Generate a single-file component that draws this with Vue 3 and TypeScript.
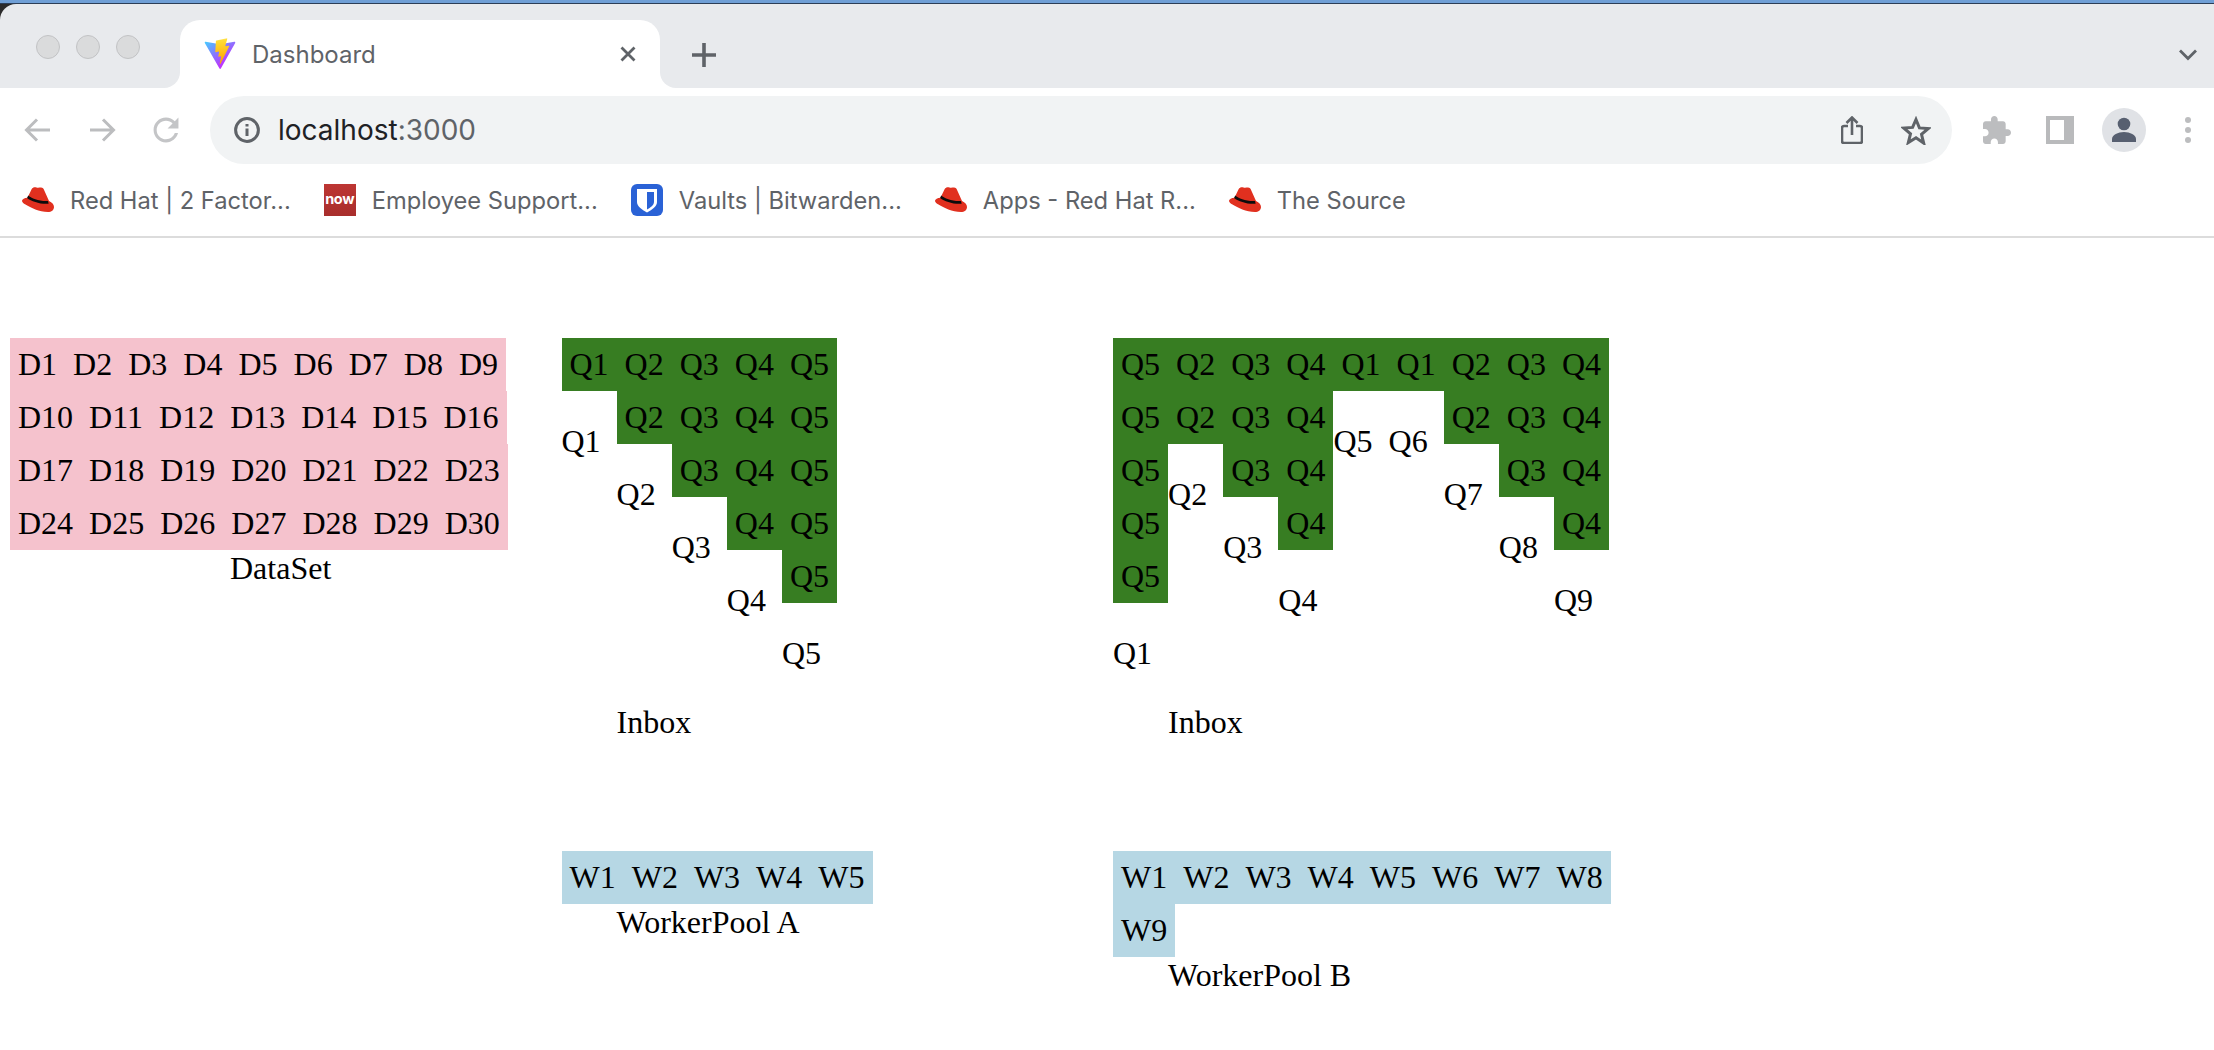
<script setup lang="ts">
interface Bookmark {
  label: string;
  icon: 'hat' | 'now' | 'vault';
}

const bookmarks: Bookmark[] = [
  { label: 'Red Hat | 2 Factor...', icon: 'hat' },
  { label: 'Employee Support...', icon: 'now' },
  { label: 'Vaults | Bitwarden...', icon: 'vault' },
  { label: 'Apps - Red Hat R...', icon: 'hat' },
  { label: 'The Source', icon: 'hat' },
];

const numbered = (prefix: string, count: number) =>
  Array.from({ length: count }, (_, i) => `${prefix}${i + 1}`);

const dataset = numbered('D', 30);

const inboxA = [
  { name: 'Q1', items: ['Q1'] },
  { name: 'Q2', items: ['Q2', 'Q2'] },
  { name: 'Q3', items: ['Q3', 'Q3', 'Q3'] },
  { name: 'Q4', items: ['Q4', 'Q4', 'Q4', 'Q4'] },
  { name: 'Q5', items: ['Q5', 'Q5', 'Q5', 'Q5', 'Q5'] },
];

const inboxB = [
  { name: 'Q1', items: ['Q5', 'Q5', 'Q5', 'Q5', 'Q5'] },
  { name: 'Q2', items: ['Q2', 'Q2'] },
  { name: 'Q3', items: ['Q3', 'Q3', 'Q3'] },
  { name: 'Q4', items: ['Q4', 'Q4', 'Q4', 'Q4'] },
  { name: 'Q5', items: ['Q1'] },
  { name: 'Q6', items: ['Q1'] },
  { name: 'Q7', items: ['Q2', 'Q2'] },
  { name: 'Q8', items: ['Q3', 'Q3', 'Q3'] },
  { name: 'Q9', items: ['Q4', 'Q4', 'Q4', 'Q4'] },
];

const poolA = numbered('W', 5);
const poolB = numbered('W', 9);
</script>

<template>
  <header class="chrome">
    <div class="top-edge"></div>
    <div class="strip">
      <div class="lights">
        <span class="light"></span>
        <span class="light"></span>
        <span class="light"></span>
      </div>
      <div class="tab">
        <svg class="favicon" viewBox="0 0 410 404">
          <defs>
            <linearGradient id="viteA" x1="6" y1="33" x2="235" y2="344" gradientUnits="userSpaceOnUse">
              <stop offset="0" stop-color="#41d1ff" />
              <stop offset="1" stop-color="#bd34fe" />
            </linearGradient>
            <linearGradient id="viteB" x1="194" y1="8" x2="236" y2="293" gradientUnits="userSpaceOnUse">
              <stop offset="0" stop-color="#ffea83" />
              <stop offset="0.08" stop-color="#ffdd35" />
              <stop offset="1" stop-color="#ffa800" />
            </linearGradient>
          </defs>
          <path fill="url(#viteA)" d="M399.641 59.5246L215.643 388.545C211.844 395.338 202.084 395.378 198.228 388.618L10.5817 59.5563C6.38087 52.1896 12.6802 43.2665 21.0281 44.7586L205.223 77.6824C206.398 77.8924 207.601 77.8904 208.776 77.6763L389.119 44.8058C397.439 43.2894 403.768 52.1434 399.641 59.5246Z" />
          <path fill="url(#viteB)" d="M292.965 1.5744L156.801 28.2552C154.563 28.6937 152.906 30.5903 152.771 32.8664L144.395 174.33C144.198 177.662 147.258 180.248 150.51 179.498L188.42 170.749C191.967 169.931 195.172 173.055 194.443 176.622L183.18 231.775C182.422 235.487 185.907 238.661 189.532 237.56L212.947 230.446C216.577 229.344 220.065 232.527 219.297 236.242L201.398 322.875C200.278 328.294 207.486 331.249 210.492 326.603L212.5 323.5L323.454 102.072C325.312 98.3645 322.108 94.137 318.036 94.9228L279.014 102.454C275.347 103.161 272.227 99.746 273.262 96.1583L298.731 7.86689C299.767 4.27314 296.636 0.855181 292.965 1.5744Z" />
        </svg>
        <span class="tab-title">Dashboard</span>
        <svg class="tab-close" viewBox="0 0 16 16">
          <path d="M1.5 1.5l13 13M14.5 1.5l-13 13" />
        </svg>
      </div>
      <div class="strip-rest">
        <svg class="new-tab" viewBox="0 0 24 24">
          <path d="M12 0v24M0 12h24" />
        </svg>
        <svg class="tab-menu" viewBox="0 0 18 12">
          <path d="M1 1.5l8 8 8-8" />
        </svg>
      </div>
    </div>

    <div class="toolbar">
      <div class="nav">
        <svg class="nav-icon" viewBox="0 0 28 28">
          <path d="M26 14H3M13 3.5L2.5 14 13 24.5" />
        </svg>
        <svg class="nav-icon" viewBox="0 0 28 28">
          <path d="M2 14h23M15 3.5L25.5 14 15 24.5" />
        </svg>
        <svg class="nav-icon reload" viewBox="3 3 18 18">
          <path d="M17.65 6.35C16.2 4.9 14.21 4 12 4c-4.42 0-7.99 3.58-7.99 8s3.57 8 7.99 8c3.73 0 6.84-2.55 7.73-6h-2.08c-.82 2.33-3.04 4-5.65 4-3.31 0-6-2.69-6-6s2.69-6 6-6c1.66 0 3.14.69 4.22 1.78L13 11h7V4l-2.35 2.35z" />
        </svg>
      </div>
      <div class="omnibox">
        <svg class="info" viewBox="0 0 26 26">
          <circle cx="13" cy="13" r="11.4" />
          <path d="M13 11.5v7.5M13 7v2.6" />
        </svg>
        <span class="url">localhost<span class="port">:3000</span></span>
        <svg class="share" viewBox="0 0 22 28">
          <path d="M7 10H3a2 2 0 0 0-2 2v13a2 2 0 0 0 2 2h16a2 2 0 0 0 2-2V12a2 2 0 0 0-2-2h-4M11 19V2M5.5 7L11 1.5 16.500 7" />
        </svg>
        <svg class="star" viewBox="0 0 30 29">
          <path d="M15 3.500l3.400 8.400 9 .6-6.900 5.800 2.200 8.800L15 21.800l-7.700 4.800 2.200-8.800-6.900-5.800 9-.6z" />
        </svg>
      </div>
      <svg class="puzzle" viewBox="2 1 21 21">
        <path d="M20.500 11H19V7c0-1.100-.9-2-2-2h-4V3.500C13 2.120 11.880 1 10.500 1S8 2.120 8 3.500V5H4c-1.100 0-1.990.9-1.990 2v3.800H3.500c1.490 0 2.700 1.210 2.700 2.700s-1.210 2.700-2.700 2.700H2V20c0 1.100.9 2 2 2h3.800v-1.500c0-1.490 1.210-2.700 2.700-2.700 1.490 0 2.700 1.210 2.700 2.700V22H17c1.100 0 2-.9 2-2v-4h1.500c1.380 0 2.500-1.120 2.500-2.500S21.880 11 20.500 11z" />
      </svg>
      <span class="side-panel"><span class="side-panel-inner"></span></span>
      <span class="avatar">
        <svg viewBox="0 0 44 44">
          <circle cx="22" cy="16" r="6.300" />
          <path d="M10 34v-3c0-4 6-7 12-7s12 3 12 7v3z" />
        </svg>
      </span>
      <span class="kebab"><i></i><i></i><i></i></span>
    </div>

    <nav class="bookmarks">
      <a v-for="mark in bookmarks" :key="mark.label" class="bookmark">
        <svg v-if="mark.icon === 'hat'" class="mark-icon" viewBox="0 0 32 32">
          <path fill="#e1301f" d="M9.700 5c1-1.600 3-2 4.800-1.400 1.500.5 3 0 4.500 0 1.700.1 2.700 1.200 3.300 3l4.700 10.400c3 1.400 5 3.600 5 6 0 3-2.600 5-6 5C17 28 9 23.500 3.500 20.500 1.200 19.200-.1 17.800 0 16.700c.1-1.500 2.600-2.800 5.500-3z" />
          <path fill="#0c0c0c" d="M6.200 11.500c3.500 3 11 6 19.800 5.500l.6 2.700c-8 .8-17-2.400-21.500-5.800z" />
        </svg>
        <span v-else-if="mark.icon === 'now'" class="now-icon">now</span>
        <svg v-else class="mark-icon" viewBox="0 0 32 32">
          <rect width="32" height="32" rx="6" fill="#2a62d6" />
          <path fill="#fff" d="M6 5h20v13c0 4.500-5.500 8-10 10.500C11.500 26 6 22.500 6 18z" />
          <path fill="#2a62d6" d="M16 8h7v10c0 3-3.500 5.500-7 7.500z" />
        </svg>
        <span class="mark-label">{{ mark.label }}</span>
      </a>
    </nav>
  </header>

  <main class="board">
    <section class="lane">
      <div class="block">
        <div class="cells">
          <span v-for="item in dataset" :key="item" class="cell pink">{{ item }}</span>
        </div>
        <div class="caption dataset-caption">DataSet</div>
      </div>
    </section>

    <section class="lane">
      <div class="block">
        <div class="queues">
          <div v-for="queue in inboxA" :key="queue.name" class="queue">
            <span v-for="(item, i) in queue.items" :key="i" class="cell green">{{ item }}</span>
            <span class="queue-name">{{ queue.name }}</span>
          </div>
        </div>
        <div class="caption inbox-caption">Inbox</div>
      </div>
      <div class="block">
        <div class="cells">
          <span v-for="item in poolA" :key="item" class="cell blue">{{ item }}</span>
        </div>
        <div class="caption">WorkerPool A</div>
      </div>
    </section>

    <section class="lane">
      <div class="block">
        <div class="queues">
          <div v-for="queue in inboxB" :key="queue.name" class="queue">
            <span v-for="(item, i) in queue.items" :key="i" class="cell green">{{ item }}</span>
            <span class="queue-name">{{ queue.name }}</span>
          </div>
        </div>
        <div class="caption inbox-caption">Inbox</div>
      </div>
      <div class="block">
        <div class="cells">
          <span v-for="item in poolB" :key="item" class="cell blue">{{ item }}</span>
        </div>
        <div class="caption">WorkerPool B</div>
      </div>
    </section>
  </main>
</template>

<style scoped>
.chrome {
  font-family: Inter, "Liberation Sans", sans-serif;
  border-bottom: 2px solid #dcdcdc;
  height: 236px;
}

.top-edge {
  height: 4px;
  background: #6f9fd6;
  border-bottom: 1px solid #2c3e57;
  box-sizing: border-box;
}

/* layered so the rounded tab and window corners have the right colour behind them */
.strip {
  display: flex;
  height: 84px;
  background:
    linear-gradient(#2b2b2b, #2b2b2b) 0 0 / 16px 16px no-repeat,
    linear-gradient(#e8eaed 40px, #fff 40px);
}

.lights {
  width: 180px;
  box-sizing: border-box;
  display: flex;
  gap: 16px;
  padding: 31px 0 0 36px;
  background: #e8eaed;
  border-radius: 16px 0 16px 0;
}

.light {
  width: 24px;
  height: 24px;
  box-sizing: border-box;
  border-radius: 50%;
  background: #dadbdc;
  border: 1px solid #c2c3c5;
}

.tab {
  width: 480px;
  margin-top: 16px;
  box-sizing: border-box;
  display: flex;
  align-items: center;
  padding: 0 24px;
  background: #fff;
  border-radius: 20px 20px 0 0;
}

.favicon {
  width: 32px;
  height: 32px;
}

.tab-title {
  margin-left: 16px;
  font-size: 24px;
  color: #5f6368;
}

.tab-close {
  width: 16px;
  height: 16px;
  margin-left: auto;
  fill: none;
  stroke: #5f6368;
  stroke-width: 2.800;
}

.strip-rest {
  flex: 1;
  display: flex;
  align-items: flex-start;
  background: #e8eaed;
  border-radius: 0 0 0 16px;
}

.new-tab {
  width: 24px;
  height: 24px;
  margin: 39px 0 0 32px;
  fill: none;
  stroke: #5f6368;
  stroke-width: 3.600;
}

.tab-menu {
  width: 18px;
  height: 12px;
  margin: 45px 17px 0 auto;
  fill: none;
  stroke: #5f6368;
  stroke-width: 2.800;
}

.toolbar {
  display: flex;
  align-items: center;
  height: 84px;
}

.nav {
  display: flex;
  gap: 36px;
  padding-left: 24px;
  margin-right: 30px;
}

.nav-icon {
  width: 28px;
  height: 28px;
  fill: none;
  stroke: #bcbdbf;
  stroke-width: 3;
}

.nav-icon.reload {
  fill: #c4c5c7;
  stroke: none;
}

.omnibox {
  width: 1742px;
  height: 68px;
  box-sizing: border-box;
  display: flex;
  align-items: center;
  padding: 0 21px 0 24px;
  background: #f1f3f4;
  border-radius: 34px;
}

.info {
  width: 26px;
  height: 26px;
  fill: none;
  stroke: #5f6368;
  stroke-width: 3;
}

.url {
  margin-left: 18px;
  font-size: 28px;
  color: #202124;
}

.port {
  color: #5f6368;
}

.share {
  width: 22px;
  height: 28px;
  margin-left: auto;
  fill: none;
  stroke: #5f6368;
  stroke-width: 2.600;
}

.star {
  width: 30px;
  height: 29px;
  margin-left: 38px;
  fill: none;
  stroke: #5f6368;
  stroke-width: 3;
}

.puzzle {
  width: 28px;
  height: 28px;
  margin-left: 31px;
  fill: #bcbdbf;
}

.side-panel {
  width: 28px;
  height: 28px;
  margin-left: 35px;
  box-sizing: border-box;
  padding: 4px 10px 4px 4px;
  background: #b9babc;
}

.side-panel-inner {
  display: block;
  height: 100%;
  background: #fff;
}

.avatar {
  width: 44px;
  height: 44px;
  margin-left: 28px;
  border-radius: 50%;
  background: #e0e2e6;
}

.avatar svg {
  display: block;
  fill: #575f70;
}

.kebab {
  display: flex;
  flex-direction: column;
  gap: 4px;
  margin-left: 39px;
}

.kebab i {
  width: 6px;
  height: 6px;
  border-radius: 50%;
  background: #bcbdbf;
}

.bookmarks {
  display: flex;
  align-items: center;
  gap: 33px;
  height: 56px;
  padding-left: 22px;
}

.bookmark {
  display: flex;
  align-items: center;
  gap: 16px;
}

.mark-icon {
  width: 32px;
  height: 32px;
}

.now-icon {
  width: 32px;
  height: 32px;
  background: linear-gradient(#bd3633, #a82e2c);
  color: #fff;
  font-size: 14.500px;
  font-weight: 700;
  line-height: 30px;
  text-align: center;
  letter-spacing: -0.3px;
}

.mark-label {
  font-size: 23.700px;
  color: #5f6368;
}

.board {
  display: flex;
  gap: 51.500px;
  padding: 100px 0 0 10px;
  font-family: "Liberation Serif", "Times New Roman", serif;
  font-size: 32px;
  color: #000;
}

.lane {
  display: flex;
  flex-direction: column;
  gap: 110px;
  width: 500px;
}

.cells {
  display: flex;
  flex-wrap: wrap;
}

.queues {
  display: flex;
}

.queue {
  display: flex;
  flex-direction: column;
}

.cell {
  padding: 8px;
}

.pink {
  background: #f5c2cd;
}

.green {
  background: #377d22;
}

.blue {
  background: #b6d7e4;
}

.queue-name {
  padding-top: 32px;
}

.caption {
  margin-left: 55px;
}

.dataset-caption {
  margin-left: 220px;
}

.inbox-caption {
  margin-top: 32px;
}
</style>

<style>
html,
body {
  background: #fff;
}
</style>
